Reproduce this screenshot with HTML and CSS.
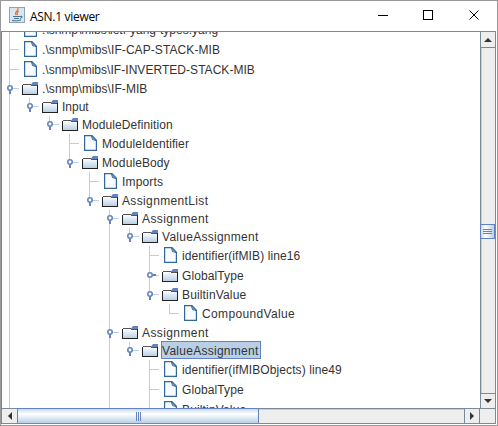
FILE: index.html
```
<!DOCTYPE html>
<html lang="en"><head><meta charset="utf-8"><title>ASN.1 viewer</title><link rel="stylesheet" href="styles.css"></head>
<body>
<svg width="0" height="0" class="defs"><defs>
<linearGradient id="fg" x1="0" y1="0" x2="0" y2="1"><stop offset="0" stop-color="#fff"/><stop offset=".3" stop-color="#e8f0f7"/><stop offset="1" stop-color="#b8cfe5"/></linearGradient>
<symbol id="folder" viewBox="0 0 16 13"><g shape-rendering="crispEdges"><path fill="url(#fg)" d="M1 3h14v9H1z"/><path fill="#222" d="M0 3h1v10H0zM15 3h1v10h-1zM1 12h14v1H1z"/><path fill="#555" d="M1 2h8v1H1zM9 3h6v1H9z"/><path fill="#fff" d="M1 3h8v1H1z"/></g><path fill="#6382bf" d="M9 2.500L11 0h5v3H9z"/></symbol>
<symbol id="file" viewBox="0 0 13 16"><path fill="#f9fcff" stroke="#336699" stroke-width="1.200" d="M.6.6h7.400l4.400 4.600v10.200H.6z"/><path fill="#b8cfe5" stroke="#336699" d="M7.500 1l1 3.500 3.500 1z"/></symbol>
<symbol id="open" viewBox="0 0 6 9"><circle cx="3" cy="3" r="2.200" fill="#fff" stroke="#6382bf" stroke-width="1.600"/><path fill="#6382bf" d="M2 5.500h2V9H2z"/></symbol>
<symbol id="closed" viewBox="0 0 9 6"><circle cx="3" cy="3" r="2.200" fill="#fff" stroke="#6382bf" stroke-width="1.600"/><path fill="#6382bf" d="M5.500 2H9v2H5.500z"/></symbol>
</defs></svg>
<div class="window">
<header class="title"><svg class="java" width="16" height="16"><rect width="16" height="16" fill="#8fa3b8"/><rect x="1" y="1" width="14" height="14" fill="#dbe5ee"/><path fill="none" stroke="#e66a3c" stroke-width="1.200" d="M9 1C10 4 5 4 7 8M10 4C7 5 9 6 8 8"/><path fill="none" stroke="#456f95" d="M4 9.500h7M5 11.500h5M3 13.500q5 1 9-.5M11 9.500q3-1 2 1l-2 1"/></svg><span>ASN.1 viewer</span>
<svg class="controls" width="104" height="12" fill="none" stroke="#000" shape-rendering="crispEdges"><path d="M0 6.500h10M45.500 1.500h9v9h-9z"/><path shape-rendering="auto" d="M91.500 1.500l9 9M100.500 1.500l-9 9"/></svg></header>
<main><div class="tree" id="tree"></div>
<div class="vbar"><div class="arrow"><svg width="8" height="4"><path fill="#333" d="M0 4L4 0l4 4z"/></svg></div><div class="track"><div class="vthumb"><i></i><i></i><i></i></div></div><div class="arrow bottom"><svg width="8" height="4"><path fill="#333" d="M0 0l4 4 4-4z"/></svg></div></div></main>
<footer><div class="harrow"><svg width="4" height="8"><path fill="#333" d="M4 0L0 4l4 4z"/></svg></div><div class="hthumb"><i></i><i></i><i></i></div><div class="htrack"></div><div class="harrow right"><svg width="4" height="8"><path fill="#333" d="M0 0l4 4-4 4z"/></svg></div><div class="corner"></div></footer>
</div><script src="tree.js"></script></body></html>
```
FILE: styles.css
```
*{box-sizing:border-box}
body{margin:0;background:#fff;font:12px "Liberation Sans",sans-serif;color:#333}
.defs{position:absolute}
.window{width:498px;height:426px;border:1px solid #999;display:flex;flex-direction:column;padding:0 1px 1px 0}
.title{height:30px;display:flex;align-items:center;padding-left:8px;font:12px "Open Sans",sans-serif;color:#000;flex:none}
.title span{margin-left:5px;letter-spacing:-.3px}
.java{margin-top:-2px}
.controls{margin:-2px 14px 0 auto}
main{height:377px;display:flex;border-top:1px solid #7a8a99;border-left:1px solid #7a8a99;flex:none}
.tree{flex:1;overflow:hidden;padding-left:1px}
.row{display:flex;height:var(--h);align-items:flex-start}
.row:first-child{margin-top:-12px}
.row svg{display:block;flex:none}
.guide{width:20px;height:100%;flex:none;position:relative}
.guide.line::before{content:"";position:absolute;left:6px;top:0;bottom:0;width:1px;background:#b8cfe5}
.guide.last::before{bottom:auto;height:9px}
.guide.branch::after{content:"";position:absolute;left:6px;top:8px;width:10px;height:1px;background:#b8cfe5}
.leaf .branch::after,.closed .branch::after{top:9px}
.guide svg{position:absolute;left:4px;top:5px;z-index:1}
.closed .guide svg{top:6px}
.folder{margin:2px 0 0 -1px}
.closed .folder{margin-top:3px}
.file{margin:1px 1px 0 1px}
.label{height:18px;line-height:18px;margin:-1px 0 0 3px;white-space:nowrap;border:1px solid transparent;letter-spacing:var(--s)}
.leaf .label,.closed .label{margin-top:0}
.selected{background:#b8cfe5;border-color:#6382bf;padding-right:1px}
.vbar{width:16px;border-left:1px solid #7a8a99;border-right:1px solid #7a8a99;background:#eee;display:flex;flex-direction:column}
.arrow{height:16px;border-bottom:1px solid #7a8a99;display:flex;align-items:center;justify-content:center;flex:none}
.arrow.bottom{height:15px;border-top:1px solid #7a8a99;border-bottom:0}
.track{flex:1;padding-top:176px;border-left:1px solid #b8cfe5}
.vthumb{height:15px;margin-left:-2px;border:1px solid #6382bf;background:linear-gradient(90deg,#c8daeb,#fff 35%,#b8cfe5);display:flex;flex-direction:column;align-items:center;justify-content:center;gap:1px}
.vthumb i{width:9px;height:1px;background:#6382bf}
footer{height:16px;display:flex;border:1px solid #7a8a99;background:#eee;flex:none}
.harrow{width:15px;display:flex;align-items:center;justify-content:center;flex:none}
.hthumb{width:242px;margin-top:-1px;border:1px solid #6382bf;border-bottom:0;background:linear-gradient(#c8daeb,#fff 35%,#b8cfe5);display:flex;align-items:center;justify-content:center;gap:1px}
.hthumb i{width:1px;height:9px;background:#6382bf}
.htrack{flex:1;border-top:1px solid #b8cfe5}
.right{border-left:1px solid #7a8a99}
.corner{width:16px;border-left:1px solid #7a8a99}
```
FILE: tree.js
```
// depth, kind, label, row height, letter spacing, selected
const rows = [
  [1, 'leaf', '.\\snmp\\mibs\\ietf-yang-types.yang', 20, 0],
  [1, 'leaf', '.\\snmp\\mibs\\IF-CAP-STACK-MIB', 20, .08],
  [1, 'leaf', '.\\snmp\\mibs\\IF-INVERTED-STACK-MIB', 20, .04],
  [1, 'open', '.\\snmp\\mibs\\IF-MIB', 18, .08],
  [2, 'open', 'Input', 18, 0],
  [3, 'open', 'ModuleDefinition', 18, .08],
  [4, 'leaf', 'ModuleIdentifier', 20, .1],
  [4, 'open', 'ModuleBody', 18, .1],
  [5, 'leaf', 'Imports', 20, .15],
  [5, 'open', 'AssignmentList', 18, .36],
  [6, 'open', 'Assignment', 18, .4],
  [7, 'open', 'ValueAssignment', 18, .27],
  [8, 'leaf', 'identifier(ifMIB) line16', 20, .09],
  [8, 'closed', 'GlobalType', 20, .1],
  [8, 'open', 'BuiltinValue', 18, .15],
  [9, 'leaf', 'CompoundValue', 20, .35],
  [6, 'open', 'Assignment', 18, .4],
  [7, 'open', 'ValueAssignment', 18, .27, true],
  [8, 'leaf', 'identifier(ifMIBObjects) line49', 20, .1],
  [8, 'leaf', 'GlobalType', 20, .1],
  [8, 'leaf', 'BuiltinValue', 20, .15]
];
const icon = (id, w, h, c = '') => `<svg class="${c}" width="${w}" height="${h}"><use href="#${id}"/></svg>`;
document.getElementById('tree').innerHTML = rows.map(([depth, kind, text, height, spacing, selected], i) => {
  let guides = '';
  for (let d = 1; d <= depth; d++) {
    let more = d === 1 || (d === 6 && i >= 10) || (d === 8 && i >= 18);
    for (let j = i + 1; j < rows.length && rows[j][0] >= d; j++) if (rows[j][0] === d) more = true;
    const own = d === depth;
    guides += `<span class="guide ${more || own ? 'line' : ''} ${own ? 'branch' : ''} ${own && !more ? 'last' : ''}">`;
    if (own && kind !== 'leaf') guides += kind === 'open' ? icon('open', 6, 9) : icon('closed', 9, 6);
    guides += '</span>';
  }
  const pic = kind === 'leaf' ? icon('file', 13, 16, 'file') : icon('folder', 16, 13, 'folder');
  return `<div class="row ${kind}" style="--h:${height}px;--s:${spacing}px">${guides}${pic}<span class="label ${selected ? 'selected' : ''}">${text}</span></div>`;
}).join('');
```
